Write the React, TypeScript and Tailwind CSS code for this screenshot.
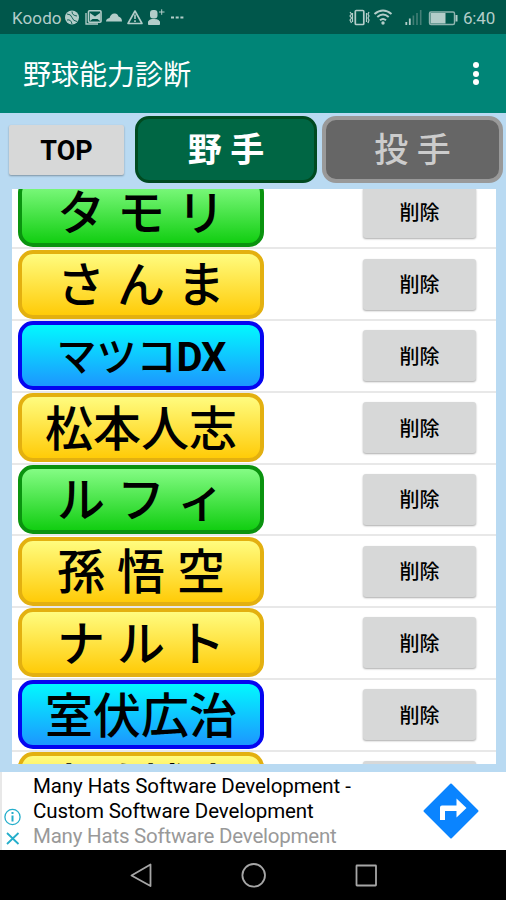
const players = [
  { name: 'タ モ リ', color: 'green' },
  { name: 'さ ん ま', color: 'yellow' },
  { name: 'マツコDX', color: 'blue', small: true },
  { name: '松本人志', color: 'yellow' },
  { name: 'ル フ ィ', color: 'green' },
  { name: '孫 悟 空', color: 'yellow' },
  { name: 'ナ ル ト', color: 'yellow' },
  { name: '室伏広治', color: 'blue' },
  { name: '宮迫博之', color: 'yellow' },
];

const colors: Record<string, string> = {
  green: 'border-[#0a930f] from-[#8cff8c] to-[#0acb0a]',
  yellow: 'border-[#e3b010] from-[#ffff87] to-[#ffc800]',
  blue: 'border-[#0505f0] from-[#00ffff] to-[#1e90ff]',
};

function StatusBar() {
  return (
    <div className="flex h-[34px] shrink-0 items-center bg-[#00574b] pt-[2px] pr-[11px] pl-[12px] text-[#b3cdc9]">
      <span className="w-[49px] text-[17px] leading-none tracking-[0.1px]">Koodo</span>
      <svg width="130" height="20" viewBox="61 8 130 20" className="shrink-0">
        <circle cx="72" cy="17.5" r="7" fill="#b3cdc9" />
        <path d="M67 14q4 0 5 3.500t5 4M72 11.500q0 4 5 4.500M67 20q4-1 5 4" fill="none" stroke="#00574b" strokeWidth="0.900" />
        <path d="M86 13v11h12" fill="none" stroke="#b3cdc9" strokeWidth="1.3" />
        <rect x="88.5" y="10.800" width="12.5" height="11.500" rx="1" fill="none" stroke="#b3cdc9" strokeWidth="1.6" />
        <path d="M90 21v-8l5 3.500 5-3.500v8l-2.500-2h-5z" fill="#b3cdc9" />
        <path d="M106 21.500q0-3 3.500-3.500q1.500-5 5.500-4.500q2.500 0 3.500 3q3.500 1 3.500 5z" fill="#b3cdc9" />
        <path d="M135 11L142 23.500h-14z" fill="none" stroke="#b3cdc9" strokeWidth="1.6" strokeLinejoin="round" />
        <path d="M135 14.500v4.500M135 20.300v1.700" stroke="#b3cdc9" strokeWidth="1.6" />
        <rect x="150" y="10" width="7.500" height="8.500" rx="3" fill="#b3cdc9" />
        <path d="M148.500 24.500v-2.500q0-2 3.500-2.500h3.500q4 .5 4 2.500v2.500zM159 12h5.500M161.700 9.300v5.500" fill="#b3cdc9" stroke="#b3cdc9" strokeWidth="1" />
        <path d="M171 17.500h3M175.700 17.500h3M180.400 17.500h3" stroke="#b3cdc9" strokeWidth="2.200" />
      </svg>
      <svg width="112" height="20" viewBox="348 8 112 20" className="mr-[4px] ml-auto shrink-0">
        <rect x="356.300" y="10.500" width="8.500" height="14" rx="1" fill="none" stroke="#b3cdc9" strokeWidth="1.700" />
        <path d="M351 12l1.500 2-1.500 2 1.500 2-1.500 2 1.500 3M353.500 13v9M367.500 13v9M370 12l-1 2 1 2-1 2 1 2-1 3" fill="none" stroke="#b3cdc9" strokeWidth="1.200" />
        <path d="M375.500 14q8.500-7 17 0M378.300 17q5.700-5 11.400 0M381 20.300q3-2.600 6 0" fill="none" stroke="#b3cdc9" strokeWidth="2" />
        <circle cx="384" cy="23" r="1.700" fill="#b3cdc9" />
        <path d="M407.300 22v3M410.800 18.500V25" stroke="#b3cdc9" strokeWidth="1.800" />
        <path d="M414.400 15.500V25M418 13v12M421.700 10v15" stroke="#437f76" strokeWidth="1.600" />
        <rect x="430.500" y="12" width="25" height="12.500" rx="1.500" fill="none" stroke="#8fb4af" strokeWidth="1.400" />
        <rect x="431.500" y="13" width="15" height="10.500" fill="#b3cdc9" />
        <path d="M457.500 15v6.500" stroke="#b3cdc9" strokeWidth="2" />
      </svg>
      <span className="text-[17px] leading-none tracking-[-0.200px]">6:40</span>
    </div>
  );
}

function AppBar() {
  return (
    <header className="flex h-[79px] shrink-0 items-center justify-between bg-[#008577] pr-[27px] pl-[23px] text-white">
      <h1 className="pt-[5px] text-[28px] leading-none">野球能力診断</h1>
      <div className="flex flex-col gap-[2.500px]">
        <span className="size-[6px] rounded-full bg-white" />
        <span className="size-[6px] rounded-full bg-white" />
        <span className="size-[6px] rounded-full bg-white" />
      </div>
    </header>
  );
}

function Tabs() {
  return (
    <div className="flex h-[76px] shrink-0 items-start pt-[3px] pl-[9px]">
      <button className="mt-[9px] h-[50px] w-[115px] rounded-[2px] bg-[#d7d8d8] pt-[3px] text-[27px] leading-none font-bold shadow-[0_1px_2px_#0005]">
        TOP
      </button>
      <button className="ml-[11px] h-[67px] w-[182px] rounded-[14px] border-[3px] border-[#004a20] bg-[#006644] pt-[1px] text-[34px] leading-none font-bold text-white">
        野 手
      </button>
      <button className="ml-[5px] h-[67px] w-[181px] rounded-[14px] border-4 border-[#999] bg-[#666] pt-[1px] text-[34px] leading-none font-medium text-[#ccc]">
        投 手
      </button>
    </div>
  );
}

function PlayerRow({ name, color, small }: { name: string; color: string; small?: boolean }) {
  return (
    <li className="flex h-[71.75px] items-center border-b-2 border-[#e8e8e8] pr-[20px] pl-[6px]">
      <button
        className={`flex h-[69px] w-[246px] shrink-0 items-center justify-center rounded-[15px] border-4 bg-linear-to-b/srgb bg-origin-border leading-none font-medium whitespace-nowrap ${small ? 'pt-[4px] text-[40px]' : 'pt-[4px] text-[48px]'} ${colors[color]}`}
      >
        {small ? (
          <span>
            {name.slice(0, 3)}
            <span className="font-bold tracking-[-1px]">{name.slice(3)}</span>
          </span>
        ) : (
          name
        )}
      </button>
      <button className="ml-auto h-[51px] w-[113px] rounded-[3px] bg-[#d7d8d8] pt-[2px] text-[20px] leading-none font-medium shadow-[0_1px_2px_#0005]">
        削除
      </button>
    </li>
  );
}

function AdBanner() {
  return (
    <div className="flex h-[78px] shrink-0 items-center border-l-2 border-[#e8e8e8] bg-white pr-[27px]">
      <svg width="18" height="40" viewBox="0 0 18 40" className="mt-[34px] ml-[2px] shrink-0" fill="none" stroke="#24aecb">
        <circle cx="8.500" cy="9" r="7.600" strokeWidth="1.300" />
        <path d="M8.500 7.500v6M8.500 4v2" strokeWidth="2" />
        <path d="M3 25l11.500 11M14.500 25L3 36" strokeWidth="1.800" />
      </svg>
      <div className="ml-[11px] pt-[1px] text-[20.500px] leading-[24.700px] tracking-[-0.100px] whitespace-nowrap text-black">
        <p>Many Hats Software Development -</p>
        <p>Custom Software Development</p>
        <p className="tracking-[-0.220px] text-[#999]">Many Hats Software Development</p>
      </div>
      <svg width="56" height="56" viewBox="0 0 56 56" className="ml-auto shrink-0">
        <path d="M28 1.500L54.500 28 28 54.500 1.500 28z" fill="#0a84ff" stroke="#0a84ff" strokeWidth="2" strokeLinejoin="round" />
        <path d="M17 37V24.500q0-2 2-2h14.500V15.500L43.500 25l-10 9.500v-6.500H22V37z" fill="#fff" />
      </svg>
    </div>
  );
}

function NavBar() {
  return (
    <div className="flex h-[50px] shrink-0 items-center justify-center bg-black">
      <svg width="248" height="26" viewBox="129 862 248 26" fill="none" stroke="#a6a6a6" strokeWidth="1.800">
        <path d="M131.500 875.500L150.500 864.500V886z" strokeLinejoin="round" />
        <circle cx="253.700" cy="875.300" r="11.300" />
        <rect x="356.500" y="865.500" width="19.500" height="20" rx="0.500" />
      </svg>
    </div>
  );
}

export default function App() {
  return (
    <div className="flex h-[900px] w-[506px] flex-col overflow-hidden bg-[#b9daf2] font-[Roboto,'Noto_Sans_CJK_JP',sans-serif] text-black">
      <StatusBar />
      <AppBar />
      <Tabs />
      <div className="mr-[10px] ml-[12px] h-[575px] shrink-0 overflow-hidden bg-white">
        <ul className="-mt-[11.500px]">
          {players.map((p) => (
            <PlayerRow key={p.name} {...p} />
          ))}
        </ul>
      </div>
      <div className="h-[8px] shrink-0" />
      <AdBanner />
      <NavBar />
    </div>
  );
}
